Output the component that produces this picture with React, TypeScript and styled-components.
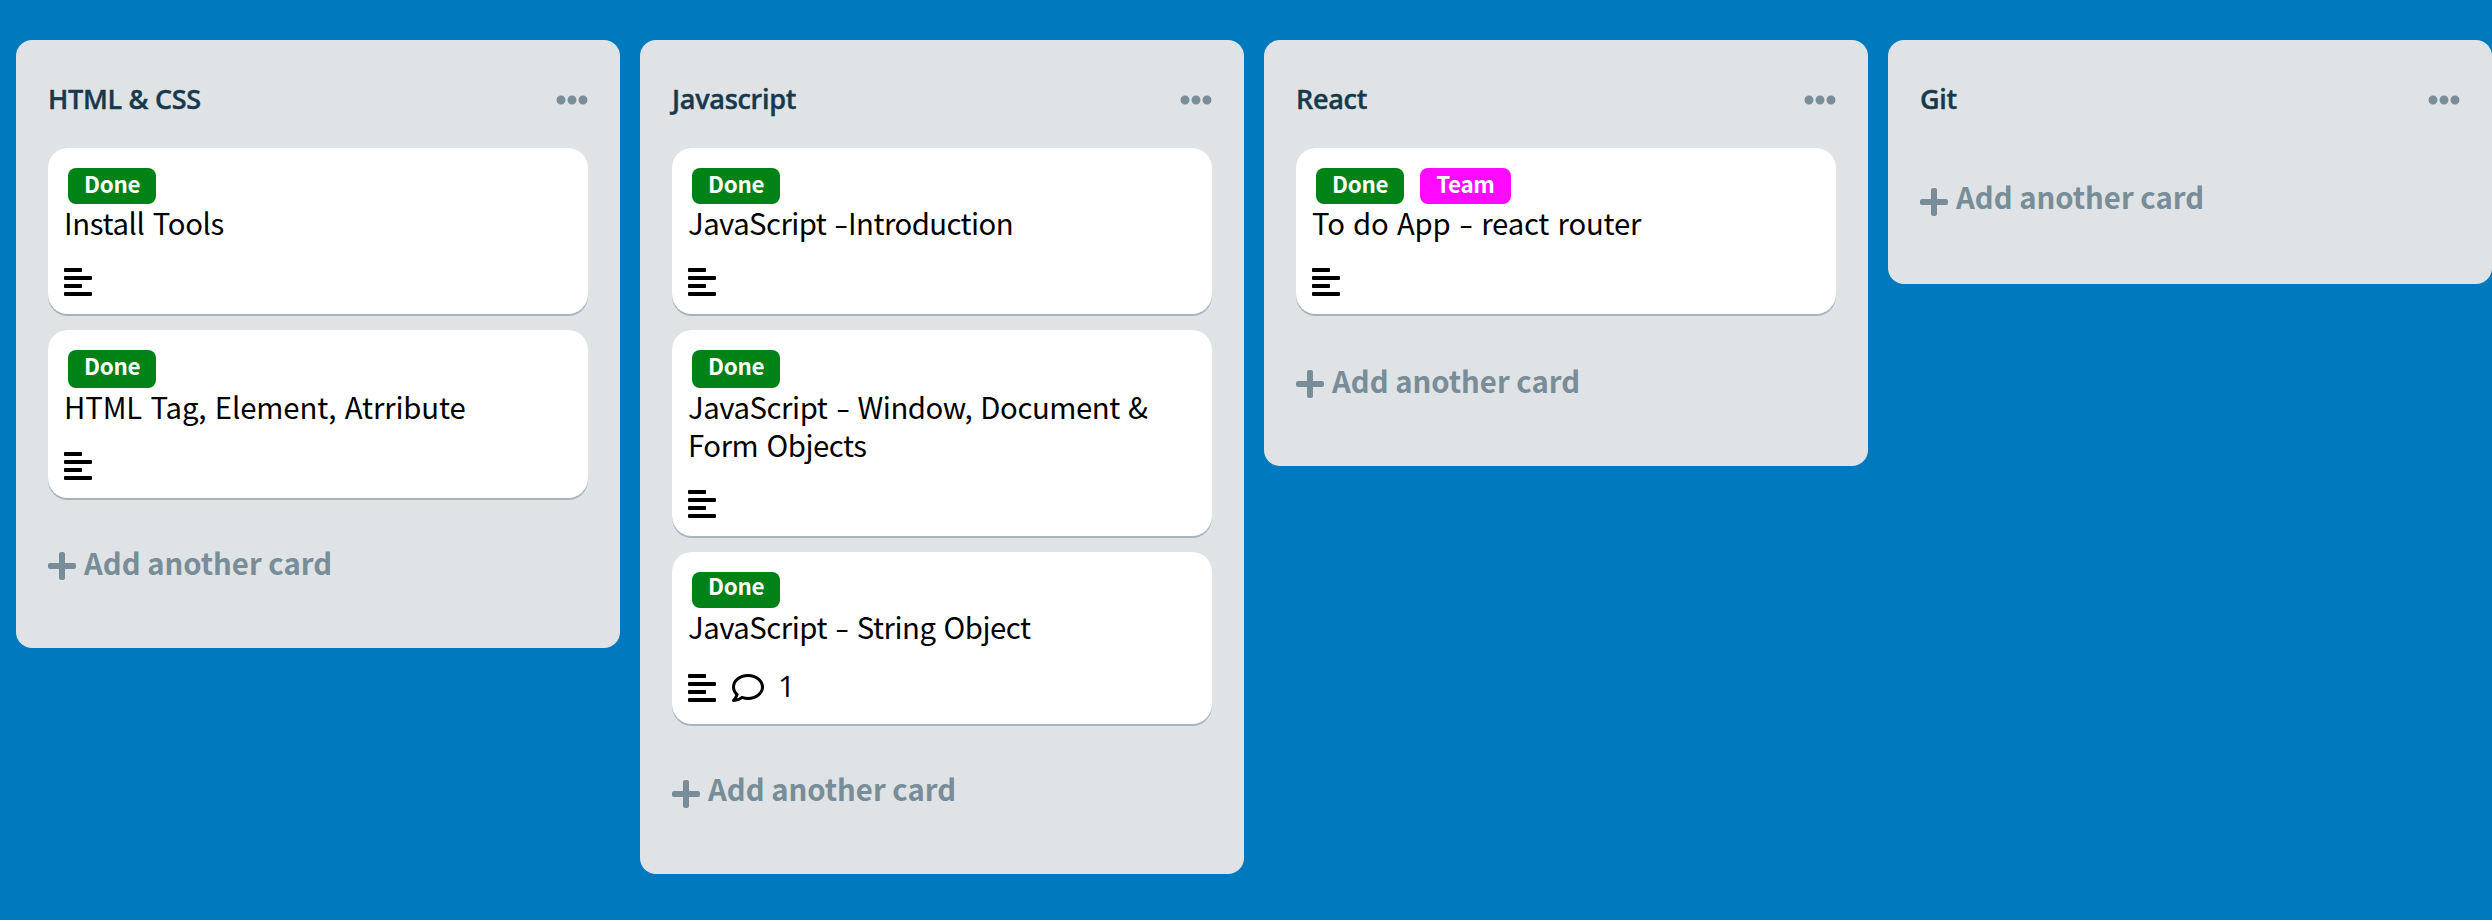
import React from 'react';
import styled, { createGlobalStyle } from 'styled-components';
import { FaAlignLeft, FaEllipsisH, FaPlus, FaRegComment } from 'react-icons/fa';

const GlobalStyle = createGlobalStyle`
  *, *::before, *::after { box-sizing: border-box; }
  body {
    margin: 0;
    background: #0079bf;
    font-family: 'Open Sans', 'Noto Sans', sans-serif;
  }
`;

const Board = styled.main`
  display: flex;
  align-items: flex-start;
  gap: 20px;
  width: 2492px;
  height: 920px;
  padding: 40px 0 0 16px;
  overflow: hidden;
  background: #0079bf;
`;

const List = styled.section`
  display: flex;
  flex: 0 0 604px;
  flex-direction: column;
  padding: 44px 32px 0;
  border-radius: 16px;
  background: #dfe3e6;
`;

const ListHeader = styled.header`
  display: flex;
  align-items: center;
  justify-content: space-between;
  height: 32px;
  margin-bottom: 32px;
`;

const ListTitle = styled.h2`
  margin: 0;
  padding-bottom: 3px;
  color: #17394d;
  font-size: 27px;
  font-weight: 600;
  line-height: 38px;
  letter-spacing: -0.3px;
  -webkit-text-stroke: 0.4px currentColor;
`;

const MenuButton = styled.button`
  display: flex;
  padding: 0;
  border: 0;
  background: none;
  color: #798d99;
  font-size: 32px;
`;

const Card = styled.article`
  margin-bottom: 16px;
  padding: 20px 16px 16px;
  border-radius: 20px;
  background: #fff;
  box-shadow: 0 2px 0 rgba(9, 45, 66, 0.25);
`;

const Labels = styled.div<{ $height: number }>`
  display: flex;
  gap: 16px;
  height: ${({ $height }) => $height}px;
  padding: 0 4px;
`;

const Label = styled.span<{ $color: string; $lift: number }>`
  padding: 0 16px;
  border-radius: 8px;
  background: ${({ $color }) => $color};
  color: #fff;
  font-family: 'Noto Sans CJK KR', sans-serif;
  font-size: 22.4px;
  font-weight: 700;
  line-height: ${({ $lift }) => 30 - $lift * 2}px;
  letter-spacing: -0.3px;
`;

const CardTitle = styled.p<{ $tracking: number }>`
  margin: -1px 0 25px;
  color: #000;
  font-family: 'Noto Sans CJK KR', sans-serif;
  font-size: 29.3px;
  line-height: 38px;
  letter-spacing: ${({ $tracking }) => $tracking}px;
  word-spacing: 2px;
`;

const Dash = styled.span`
  display: inline-block;
  margin: 0 2px;
  transform: scaleX(1.4);
`;

const Meta = styled.div<{ $tall: boolean }>`
  display: flex;
  gap: 16px;
  height: ${({ $tall }) => ($tall ? 38 : 32)}px;
  padding-top: ${({ $tall }) => ($tall ? 2 : 0)}px;
  font-size: 32px;
`;

const DescriptionIcon = styled(FaAlignLeft)`
  width: 28px;
  height: 32px;
`;

const CommentCount = styled.span`
  margin-left: -2px;
  font-size: 30px;
  line-height: 28px;
`;

const AddCard = styled.button<{ $top: number; $bottom: number }>`
  display: flex;
  align-items: center;
  gap: 8px;
  height: 32px;
  margin: ${({ $top }) => $top}px 0 ${({ $bottom }) => $bottom}px;
  padding: 0;
  border: 0;
  background: none;
  color: #798d99;
`;

const PlusIcon = styled(FaPlus)`
  width: 28px;
  height: 32px;
`;

const AddCardText = styled.span<{ $lift: number }>`
  padding-bottom: ${({ $lift }) => $lift}px;
  font-family: 'Noto Sans CJK KR', sans-serif;
  font-size: 29.3px;
  font-weight: 700;
  line-height: 40px;
`;

type LabelName = 'Done' | 'Team';

interface CardData {
  title: string;
  labels: LabelName[];
  labelHeight?: number;
  labelLift?: number;
  tracking?: number;
  comments?: number;
}

interface ListData {
  title: string;
  cards: CardData[];
  addTop?: number;
  addBottom?: number;
  addLift?: number;
}

const labelColors: Record<LabelName, string> = { Done: '#008217', Team: '#ff0aff' };

const lists: ListData[] = [
  {
    title: 'HTML & CSS',
    addTop: 36,
    cards: [
      { title: 'Install Tools', labels: ['Done'], tracking: -0.35 },
      { title: 'HTML Tag, Element, Atrribute', labels: ['Done'], labelHeight: 38, tracking: -0.12 },
    ],
  },
  {
    title: 'Javascript',
    addBottom: 64,
    addLift: 12,
    cards: [
      { title: 'JavaScript -Introduction', labels: ['Done'], tracking: -0.54 },
      {
        title: 'JavaScript - Window, Document & Form Objects',
        labels: ['Done'],
        labelHeight: 38,
        tracking: -0.43,
      },
      { title: 'JavaScript - String Object', labels: ['Done'], labelLift: 2, tracking: -0.48, comments: 1 },
    ],
  },
  { title: 'React', cards: [{ title: 'To do App - react router', labels: ['Done', 'Team'] }] },
  { title: 'Git', addLift: 12, cards: [] },
];

function renderTitle(title: string) {
  const [before, after] = title.split('-');
  if (after === undefined) return title;
  return (
    <>
      {before}
      <Dash>-</Dash>
      {after}
    </>
  );
}

function CardView({
  title,
  labels,
  labelHeight = 36,
  labelLift = 0,
  tracking = -0.2,
  comments,
}: CardData) {
  return (
    <Card>
      <Labels $height={labelHeight}>
        {labels.map((name) => (
          <Label key={name} $color={labelColors[name]} $lift={labelLift}>
            {name}
          </Label>
        ))}
      </Labels>
      <CardTitle $tracking={tracking}>{renderTitle(title)}</CardTitle>
      <Meta $tall={comments !== undefined}>
        <DescriptionIcon />
        {comments !== undefined && (
          <>
            <FaRegComment />
            <CommentCount>{comments}</CommentCount>
          </>
        )}
      </Meta>
    </Card>
  );
}

export default function App() {
  return (
    <>
      <GlobalStyle />
      <Board>
        {lists.map(({ title, cards, addTop = 38, addBottom = 66, addLift = 8 }) => (
          <List key={title}>
            <ListHeader>
              <ListTitle>{title}</ListTitle>
              <MenuButton aria-label="List actions">
                <FaEllipsisH />
              </MenuButton>
            </ListHeader>
            {cards.map((card) => (
              <CardView key={card.title} {...card} />
            ))}
            <AddCard $top={addTop} $bottom={addBottom}>
              <PlusIcon />
              <AddCardText $lift={addLift}>Add another card</AddCardText>
            </AddCard>
          </List>
        ))}
      </Board>
    </>
  );
}
